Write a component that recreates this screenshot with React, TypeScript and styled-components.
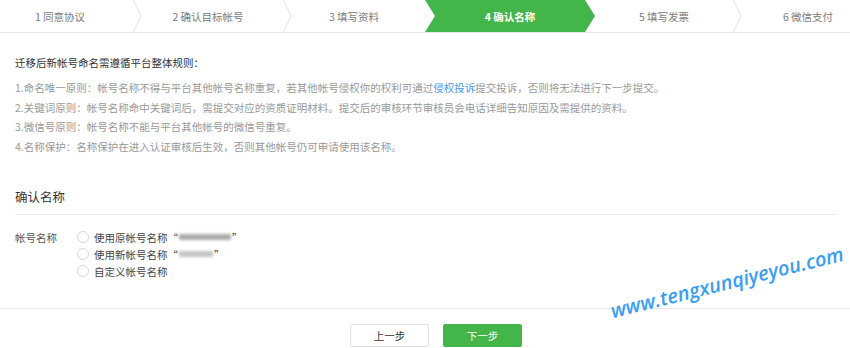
import styled, { createGlobalStyle } from 'styled-components';

const GlobalStyle = createGlobalStyle`
  body {
    margin: 0;
    background: #fff;
    overflow: hidden;
    font-family: "Noto Sans CJK SC", "Noto Sans", sans-serif;
  }
`;

const steps = [
  { label: '1 同意协议', width: 146 },
  { label: '2 确认目标帐号', width: 150 },
  { label: '3 填写资料', width: 142 },
  { label: '4 确认名称', width: 170 },
  { label: '5 填写发票', width: 138 },
  { label: '6 微信支付', width: 150 },
];
const ACTIVE = 3;

export default function App() {
  const rules = [
    <>1.命名唯一原则：帐号名称不得与平台其他帐号名称重复，若其他帐号侵权你的权利可通过<Link>侵权投诉</Link>提交投诉，否则将无法进行下一步提交。</>,
    <>2.关键词原则：帐号名称命中关键词后，需提交对应的资质证明材料。提交后的审核环节审核员会电话详细告知原因及需提供的资料。</>,
    <>3.微信号原则：帐号名称不能与平台其他帐号的微信号重复。</>,
    <>4.名称保护：名称保护在进入认证审核后生效，否则其他帐号仍可申请使用该名称。</>,
  ];

  return <Page>
    <GlobalStyle />
    <StepBar>
      {steps.map((s, i) =>
        <Step key={s.label} $w={s.width} $active={i === ACTIVE}>
          {s.label}
          {i !== ACTIVE && i !== ACTIVE - 1 &&
            <Chevron width="9" height="32" viewBox="0 0 9 32">
              <polyline points="0.5,0 8,16 0.5,32" fill="none" stroke="#e4e4e4" strokeWidth="1" />
            </Chevron>}
        </Step>
      )}
    </StepBar>

    <Content>
      <RulesTitle>迁移后新帐号命名需遵循平台整体规则：</RulesTitle>
      <Rules>
        {rules.map((r, i) => <li key={i}>{r}</li>)}
      </Rules>

      <SectionTitle>确认名称</SectionTitle>

      <FormRow>
        <FieldLabel>帐号名称</FieldLabel>
        <Options>
          <Option><Radio />使用原帐号名称“<Blurred $w={52} />”</Option>
          <Option><Radio />使用新帐号名称“<Blurred $w={34} $light />”</Option>
          <Option><Radio />自定义帐号名称</Option>
        </Options>
      </FormRow>
    </Content>

    <Footer>
      <Button>上一步</Button>
      <Button $primary>下一步</Button>
    </Footer>

    <Watermark>www.tengxunqiyeyou.com</Watermark>
  </Page>;
}

const Page = styled.div`
  position: relative;
  width: 850px;
  height: 348px;
  overflow: hidden;
`;

const StepBar = styled.div`
  display: flex;
  height: 32px;
  margin-left: -13px;
  border-bottom: 1px solid #e8e8e8;
`;

const Step = styled.div<{ $w: number; $active: boolean }>`
  position: relative;
  flex: 0 0 ${p => p.$w}px;
  display: flex;
  align-items: center;
  justify-content: center;
  font-size: 10.5px;
  color: ${p => p.$active ? '#fff' : '#7b7b7b'};
  font-weight: ${p => p.$active ? 700 : 400};
  background: ${p => p.$active ? '#44b549' : 'transparent'};
  clip-path: ${p => p.$active
    ? 'polygon(0 0, calc(100% - 10px) 0, 100% 50%, calc(100% - 10px) 100%, 0 100%, 10px 50%)'
    : 'none'};
`;

const Chevron = styled.svg`
  position: absolute;
  left: 100%;
  top: 0;
`;

const Content = styled.div`
  padding: 20px 15px 0;
`;

const RulesTitle = styled.div`
  font-size: 10.5px;
  line-height: 20px;
  color: #333;
  margin-bottom: 5px;
`;

const Rules = styled.ul`
  list-style: none;
  margin: 0;
  padding: 0;
  font-size: 10.5px;
  line-height: 19.7px;
  color: #999;
`;

const Link = styled.a`
  color: #459ae9;
`;

const SectionTitle = styled.div`
  margin-top: 30px;
  padding-bottom: 7px;
  border-bottom: 1px solid #e8e8e8;
  font-size: 12.5px;
  line-height: 20px;
  color: #353535;
`;

const FormRow = styled.div`
  display: flex;
  margin-top: 14px;
  font-size: 10.5px;
  line-height: 17px;
  color: #444;
`;

const FieldLabel = styled.div`
  width: 62px;
  color: #555;
`;

const Options = styled.div`
  display: flex;
  flex-direction: column;
`;

const Option = styled.label`
  display: flex;
  align-items: center;
  color: #444;
`;

const Radio = styled.span`
  width: 10px;
  height: 10px;
  border: 1px solid #d6d6d6;
  border-radius: 50%;
  margin-right: 5px;
  flex-shrink: 0;
`;

const Blurred = styled.span<{ $w: number; $light?: boolean }>`
  display: inline-block;
  width: ${p => p.$w}px;
  height: 6px;
  margin: 0 1px;
  background: ${p => p.$light ? '#c4c4c4' : '#aaa'};
  filter: blur(1.5px);
`;

const Footer = styled.div`
  margin-top: 28px;
  border-top: 1px solid #e8e8e8;
  padding: 15px 0 0 22px;
  display: flex;
  justify-content: center;
  gap: 14px;
`;

const Button = styled.button<{ $primary?: boolean }>`
  width: 79px;
  height: 23px;
  padding: 0;
  border-radius: 2px;
  font-family: inherit;
  font-size: 10.5px;
  border: 1px solid ${p => p.$primary ? '#44b549' : '#e2e2e2'};
  background: ${p => p.$primary ? '#44b549' : '#fff'};
  color: ${p => p.$primary ? '#fff' : '#333'};
`;

const Watermark = styled.div`
  position: absolute;
  left: 727px;
  top: 282px;
  transform: translate(-50%, -50%) rotate(-14deg);
  white-space: nowrap;
  font-family: "Open Sans", sans-serif;
  font-style: italic;
  font-weight: 600;
  font-size: 20px;
  color: #3a9ef0;
`;
